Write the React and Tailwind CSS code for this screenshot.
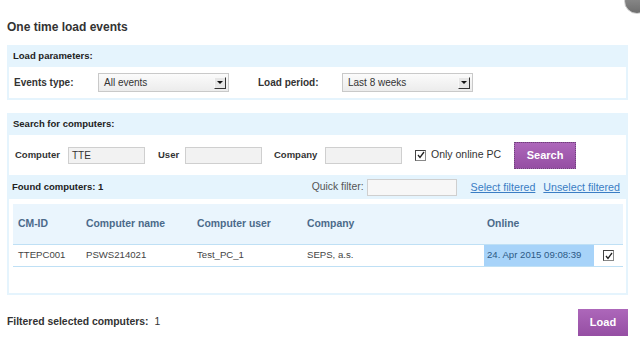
import React from 'react';

const SelectBox = ({ value, width }) => (
  <div
    className="flex items-center justify-between h-[19px] border border-[#c9c9c9] bg-gradient-to-b from-[#fbfbfb] to-[#ececec] pl-[5px] pr-[2px]"
    style={{ width }}
  >
    <span className="text-[10px] text-[#333]">{value}</span>
    <span className="flex items-center justify-center w-[12px] h-[12px] bg-[#e6e6e6] border border-[#f8f8f8] border-r-[#333] border-b-[#333]">
      <span className="w-0 h-0 border-l-[3px] border-r-[3px] border-t-[3px] border-l-transparent border-r-transparent border-t-[#111]" />
    </span>
  </div>
);

const TextInput = ({ value = '', className = '' }) => (
  <div className={`h-[17px] border border-[#cfcfcf] bg-[#f2f2f2] px-[3px] text-[10px] leading-[15px] text-[#333] ${className}`}>
    {value}
  </div>
);

const Check = () => (
  <span className="flex items-center justify-center w-[11px] h-[11px] border border-[#888] border-t-[#444] border-l-[#444] bg-white">
    <svg width="8" height="8" viewBox="0 0 8 8">
      <path d="M1 4 L3 6.5 L7 1" fill="none" stroke="#222" strokeWidth="1.3" />
    </svg>
  </span>
);

const PurpleButton = ({ children, className = '' }) => (
  <button className={`flex items-center justify-center bg-gradient-to-b from-[#ad67ba] to-[#954ea3] text-white font-bold text-[11px] ${className}`}>
    {children}
  </button>
);

export default function App() {
  return (
    <div className="relative w-[640px] h-[342px] bg-white overflow-hidden font-['Liberation_Sans',Arial,sans-serif] text-[#333]">
      {/* close button, mostly cut off */}
      <div className="absolute -right-[10px] -top-[12px] w-[26px] h-[26px] rounded-full bg-gradient-to-b from-[#9a9a9a] to-[#6e6e6e] border border-[#cfcfcf]" />

      <div className="pt-[20px] px-[7px]">
        <h1 className="text-[12px] font-bold text-[#333] leading-[15px]">One time load events</h1>

        {/* Load parameters */}
        <div className="mt-[10px] w-[621px] border-2 border-t-0 border-[#e5f4fd]">
          <div className="h-[22px] bg-[#e5f4fd] px-[4px] flex items-center">
            <span className="text-[9.5px] font-bold text-[#222]">Load parameters:</span>
          </div>
          <div className="h-[31px] bg-white flex items-center">
            <span className="ml-[5px] w-[84px] text-[10px] font-bold text-[#333]">Events type:</span>
            <SelectBox value="All events" width={131} />
            <span className="ml-[29px] w-[84px] text-[10px] font-bold text-[#333]">Load period:</span>
            <SelectBox value="Last 8 weeks" width={131} />
          </div>
        </div>

        {/* Search for computers */}
        <div className="mt-[13px] w-[621px] border-2 border-t-0 border-[#e5f4fd]">
          <div className="h-[22px] bg-[#e5f4fd] px-[4px] flex items-center">
            <span className="text-[9.5px] font-bold text-[#222]">Search for computers:</span>
          </div>
          <div className="h-[40px] bg-white flex items-center">
            <span className="ml-[6px] w-[53px] text-[9.5px] font-bold">Computer</span>
            <TextInput value="TTE" className="w-[77px]" />
            <span className="ml-[13px] w-[27px] text-[9.5px] font-bold">User</span>
            <TextInput className="w-[77px]" />
            <span className="ml-[12px] w-[51px] text-[9.5px] font-bold">Company</span>
            <TextInput className="w-[77px]" />
            <span className="ml-[13px]"><Check /></span>
            <span className="ml-[5px] text-[10.5px] text-[#333]">Only online PC</span>
            <PurpleButton className="ml-[13px] w-[62px] h-[27px] border border-[#6e4379] border-dotted">Search</PurpleButton>
          </div>
          <div className="h-[24px] bg-[#e5f4fd] flex items-center px-[3px]">
            <span className="text-[9.5px] font-bold text-[#222]">Found computers: 1</span>
            <span className="ml-auto text-[10.4px] text-[#555]">Quick filter:</span>
            <TextInput className="ml-[3px] w-[90px] bg-[#f7f7f7]" />
            <a className="ml-[14px] text-[10.7px] text-[#3a7dc4] underline">Select filtered</a>
            <a className="ml-[8px] mr-[3px] text-[10.7px] text-[#3a7dc4] underline">Unselect filtered</a>
          </div>
          <div className="h-[94px] bg-white px-[4px] pt-[5px]">
            <div className="grid grid-cols-[73px_111px_110px_177px_110px_29px] text-[9.6px]">
              <div className="col-span-6 grid grid-cols-subgrid h-[41px] bg-[#eaf5fd] items-center border-b border-[#bfe0f5] font-bold text-[10.4px] text-[#4b6a8a]">
                <span className="pl-[5px]">CM-ID</span>
                <span>Computer name</span>
                <span>Computer user</span>
                <span>Company</span>
                <span className="pl-[3px]">Online</span>
                <span />
              </div>
              <div className="col-span-6 grid grid-cols-subgrid h-[22px] items-center border-b border-[#bfe0f5] text-[#444]">
                <span className="pl-[5px]">TTEPC001</span>
                <span>PSWS214021</span>
                <span>Test_PC_1</span>
                <span>SEPS, a.s.</span>
                <span className="h-full flex items-center pl-[3px] bg-[#a7d3f9] text-[#2d5a86]">24. Apr 2015 09:08:39</span>
                <span className="flex justify-center"><Check /></span>
              </div>
            </div>
          </div>
        </div>

        {/* Footer */}
        <div className="mt-[14px] w-[621px] flex items-start justify-between">
          <span className="pt-[5px] text-[10.4px] text-[#333]">
            <span className="font-bold">Filtered selected computers:</span>
            <span className="ml-[6px]">1</span>
          </span>
          <PurpleButton className="w-[50px] h-[27px]">Load</PurpleButton>
        </div>
      </div>
    </div>
  );
}
